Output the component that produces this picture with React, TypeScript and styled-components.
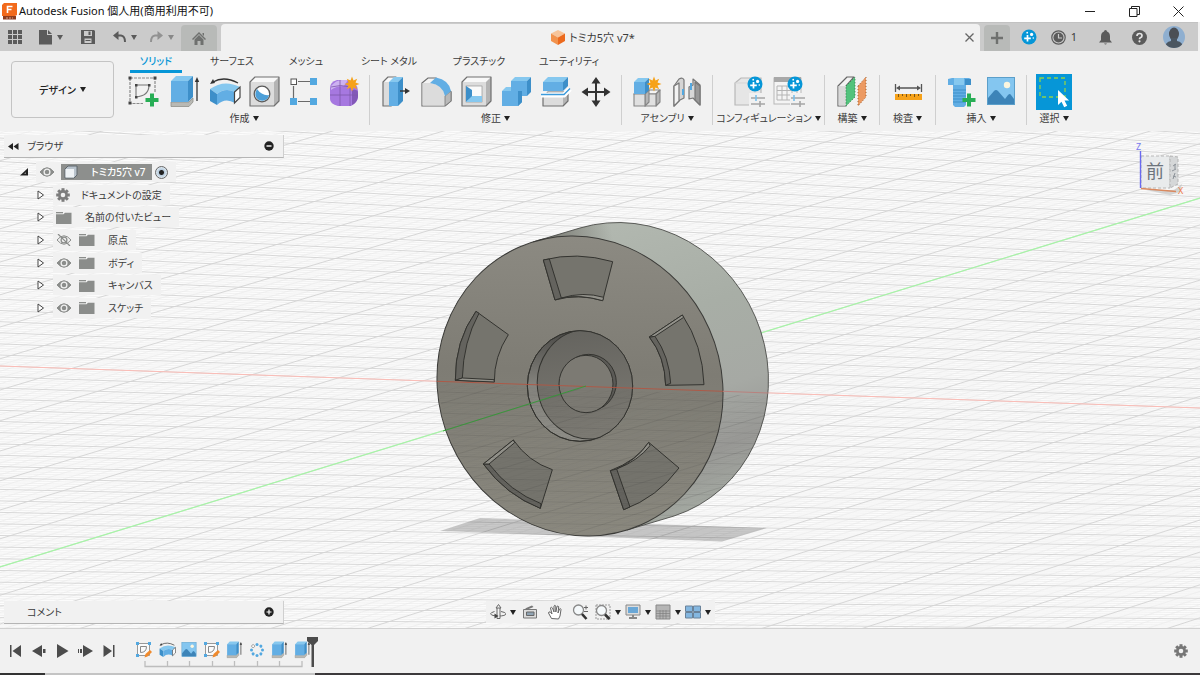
import React from "react";
import styled, { createGlobalStyle, css } from "styled-components";

const Global = createGlobalStyle`
  * { box-sizing: border-box; }
  html, body { margin: 0; padding: 0; }
  body {
    font-family: "Noto Sans", "Noto Sans CJK JP", sans-serif;
    font-feature-settings: "palt";
    font-size: 11px;
    line-height: 16px;
    color: #3c3c3c;
    background: #f1f1f1;
  }
  button { font: inherit; font-feature-settings: inherit; color: inherit; background: none; border: 0; padding: 0; margin: 0; }
  svg { display: block; flex: none; }
`;

const Page = styled.div`
  min-height: 100vh;
  display: flex;
  flex-direction: column;
`;

/* ---------- title bar ---------- */
const TitleBar = styled.header`
  height: 22px;
  background: #fff;
  display: flex;
  align-items: center;
  padding-left: 2px;
  color: #111;
`;
const Title = styled.h1`
  margin: 0;
  padding-left: 2px;
  font-size: 11px;
  font-weight: 400;
  flex: 1;
`;
const WindowButton = styled.button`
  width: 44px;
  height: 22px;
  display: grid;
  place-items: center;
`;

/* ---------- document tabs ---------- */
const TabStrip = styled.div`
  height: 29px;
  margin-right: 2px;
  background: #cbcbcb;
  display: flex;
  align-items: flex-end;
  border-top: 1px solid #c2c2c2;
`;
const QuickAccess = styled.div`
  width: 181px;
  height: 28px;
  display: flex;
  align-items: center;
`;
const QuickButton = styled.button<{ $w: number }>`
  width: ${(p) => p.$w}px;
  height: 28px;
  display: flex;
  align-items: center;
  justify-content: center;
  gap: 5px;
`;
const StubTab = styled.button<{ $w: number }>`
  width: ${(p) => p.$w}px;
  height: 26px;
  background: #b8bab8;
  border-radius: 4px 4px 0 0;
  display: grid;
  place-items: center;
`;
const DocumentTab = styled.div`
  flex: 1;
  height: 27px;
  margin: 0 4px;
  padding-right: 6px;
  background: #f1f1f1;
  border-radius: 4px 4px 0 0;
  display: flex;
  align-items: center;
`;
const DocumentName = styled.div`
  flex: 1;
  display: flex;
  align-items: center;
  justify-content: center;
  gap: 4px;
`;
const AccountTools = styled.div`
  display: flex;
  align-items: center;
  height: 28px;
`;

/* ---------- ribbon ---------- */
const Ribbon = styled.div`
  height: 80px;
  background: #f1f1f1;
  display: flex;
  padding-left: 11px;
`;
const WorkspaceButton = styled.button`
  width: 103px;
  height: 57px;
  margin: 10px 10px 0 0;
  border: 1px solid #c4c4c4;
  border-radius: 4px;
  font-size: 10px;
  font-weight: 500;
  color: #222;
  display: flex;
  align-items: center;
  justify-content: center;
  gap: 4px;
`;
const RibbonMain = styled.div`
  flex: 1;
`;
const RibbonTabs = styled.div`
  display: grid;
  grid-template-columns: 52px 100px 48px 118px 62px 118px;
  padding-left: 6px;
`;
const RibbonTab = styled.button<{ $active?: boolean }>`
  height: 22px;
  font-size: 10px;
  border-bottom: 3px solid transparent;
  white-space: nowrap;
  ${(p) =>
    p.$active &&
    css`
      color: #0696d7;
      font-weight: 500;
      border-color: #0696d7;
    `}
`;
const Groups = styled.div`
  display: flex;
`;
const Group = styled.section<{ $w: number }>`
  width: ${(p) => p.$w}px;
  height: 50px;
  margin-top: 2px;
  border-right: 1px solid #cfcfcf;
  display: flex;
  flex-direction: column;
  align-items: center;
  &:first-child { padding-right: 5px; }
  &:last-child { border: 0; }
`;
const IconRow = styled.div`
  display: flex;
  gap: 4px;
  height: 36px;
  margin-top: -1px;
`;
const ToolButton = styled.button<{ $selected?: boolean }>`
  width: 36px;
  height: 36px;
  background: ${(p) => (p.$selected ? "#0696d7" : "transparent")};
`;
const GroupLabel = styled.button`
  display: flex;
  align-items: center;
  gap: 3px;
  height: 18px;
  font-size: 10px;
  white-space: nowrap;
`;

/* ---------- canvas ---------- */
const Canvas = styled.main`
  position: relative;
  flex: 1;
  display: flex;
  flex-direction: column;
  justify-content: space-between;
  padding: 4px;
  background: #fcfcfc;
  overflow: hidden;
`;
const Scene = styled.svg`
  position: absolute;
  inset: 0;
  width: 100%;
  height: 100%;
`;
const CanvasRow = styled.div`
  position: relative;
  display: grid;
  grid-template-columns: 280px 1fr 280px;
  align-items: start;
`;
const PanelBar = styled.div`
  height: 23px;
  background: #f1f1f1;
  border-bottom: 1px solid #b5b5b5;
  border-right: 1px solid #cfcfcf;
  display: flex;
  align-items: center;
  padding: 0 8px 0 4px;
  font-size: 10px;
`;
const PanelTitle = styled.span`
  flex: 1;
  padding-left: 8px;
`;
const PanelToggle = styled.button`
  width: 11px;
  height: 11px;
`;
const Tree = styled.ul`
  list-style: none;
  margin: 3px 0 0;
  padding: 0;
  height: 158px;
  display: grid;
  grid-auto-rows: 1fr;
`;
const TreeItem = styled.li<{ $root?: boolean }>`
  display: flex;
  align-items: center;
  gap: ${(p) => (p.$root ? 7 : 8)}px;
  padding-left: ${(p) => (p.$root ? 16 : 32)}px;
`;
const TreeChip = styled.div<{ $root?: boolean }>`
  height: 20px;
  background: #f1f1f1;
  display: flex;
  align-items: center;
  gap: ${(p) => (p.$root ? 6 : 7)}px;
  padding: 0 8px 0 3px;
  font-size: 10px;
  white-space: nowrap;
`;
const TreeLabel = styled.span<{ $inset: number }>`
  padding-left: ${(p) => p.$inset}px;
`;
const RootLabel = styled.span`
  height: 16px;
  background: #8d8f8d;
  color: #fff;
  font-weight: 500;
  display: flex;
  align-items: center;
  gap: 13px;
  padding: 0 6px 0 3px;
`;
const ActiveRadio = styled.input`
  appearance: none;
  width: 13px;
  height: 13px;
  margin: 0 0 0 -3px;
  border: 1px solid #666;
  border-radius: 50%;
  background: radial-gradient(circle, #222 0 2px, #b7cbdc 3px, #e8f0f6 6px);
`;
const CubeSlot = styled.div`
  justify-self: end;
  padding: 5px 8px 0 0;
  grid-column: 3;
`;
const NavBar = styled.div`
  justify-self: center;
  height: 22px;
  background: #f1f1f1;
  display: flex;
  align-items: center;
  padding: 0 2px;
`;
const NavButton = styled.button<{ $menu?: boolean }>`
  width: ${(p) => (p.$menu ? 30 : 25)}px;
  height: 20px;
  display: flex;
  align-items: center;
  justify-content: center;
  gap: 4px;
`;

/* ---------- timeline ---------- */
const Timeline = styled.footer`
  height: 45px;
  background: #f1f1f1;
  border-top: 1px solid #d2d2d2;
  display: flex;
  align-items: flex-start;
  padding: 10px 8px 0 4px;
`;
const PlayButton = styled.button`
  width: 23px;
  height: 24px;
  display: grid;
  place-items: center;
`;
const Playback = styled.div`
  display: flex;
  width: 129px;
`;
const History = styled.div`
  position: relative;
  width: 180px;
`;
const Features = styled.div`
  display: grid;
  grid-template-columns: repeat(8, 1fr);
  height: 22px;
`;
const FeatureButton = styled.button`
  display: grid;
  place-items: center;
  height: 22px;
`;
const Marker = styled.svg`
  position: absolute;
  right: -6px;
  top: -2px;
`;
const Spacer = styled.div`
  flex: 1;
`;
const BottomEdge = styled.div`
  height: 2px;
  background: linear-gradient(90deg, #333 45px, #c4c4c4 45px 315px, #3d3a3c 315px);
`;

/* ---------- small glyphs ---------- */
const Caret = ({ c = "#222" }: { c?: string }) => (
  <svg width="6" height="5" viewBox="0 0 6 5"><path d="M0 0h6L3 5z" fill={c} /></svg>
);
const Gear = ({ size = 14, c = "#7d7d7d" }: { size?: number; c?: string }) => (
  <svg width={size} height={size} viewBox="-7 -7 14 14">
    {[0, 45, 90, 135].map((a) => (
      <rect key={a} x="-1.5" y="-6.8" width="3" height="13.6" fill={c} transform={`rotate(${a})`} />
    ))}
    <circle r="3.6" fill="none" stroke={c} strokeWidth="2.6" />
    <circle r="2.3" fill="#f1f1f1" />
  </svg>
);
const Eye = ({ off }: { off?: boolean }) => (
  <svg width="16" height="12" viewBox="0 0 16 12">
    <path d="M1 6Q8-2.5 15 6Q8 14.500 1 6z" fill={off ? "none" : "#8b8d8b"} stroke="#8b8d8b" />
    <circle cx="8" cy="6" r="2.900" fill={off ? "none" : "#8b8d8b"} stroke={off ? "#8b8d8b" : "#f1f1f1"} strokeWidth="1.300" />
    {off && <path d="M2 0l12 12" stroke="#8b8d8b" strokeWidth="1.200" />}
  </svg>
);
const Folder = () => (
  <svg width="16" height="13" viewBox="0 0 16 13">
    <path d="M0 1h7v1.300H0z" fill="#8b8d8b" /><path d="M0 3.300h7.500l1.500-1.600h6.500V13H0z" fill="#8b8d8b" />
  </svg>
);
const Badge = ({ x, y, r = 7.5 }: { x: number; y: number; r?: number }) => (
  <g transform={`translate(${x} ${y})`}>
    <circle r={r} fill="#0696d7" />
    <path d="M-1.500-2v6.500M-4.800 1.300h6.600" stroke="#fff" strokeWidth="1.700" />
    <circle cx="2.600" cy="-2.600" r="1.600" fill="#fff" />
    <circle cx="-1.800" cy="-4.300" r=".9" fill="#fff" />
    <circle cx="4.300" cy="1" r=".8" fill="#fff" />
  </g>
);
const Star = ({ x, y }: { x: number; y: number }) => (
  <path
    transform={`translate(${x} ${y})`}
    fill="#f6a21a"
    d="M0-7.500 1.500-3.400 5.200-5.200 3.500-1.500 7.500 0 3.500 1.500 5.200 5.200 1.500 3.500 0 7.500-1.500 3.500-5.200 5.200-3.500 1.500-7.500 0-3.500-1.500-5.200-5.200-1.500-3.400z"
  />
);
const Plus = ({ x, y }: { x: number; y: number }) => (
  <path transform={`translate(${x} ${y})`} d="M0-6.500v13M-6.500 0h13" stroke="#27ae55" strokeWidth="4" />
);

type BoxProps = { x: number; y: number; w: number; h: number; d: number; blue?: boolean };
/* Extruded block: front face at x,y with a depth offset d up and to the right. */
const Block = ({ x, y, w, h, d, blue }: BoxProps) => (
  <g strokeLinejoin="round" stroke={blue ? "none" : "#858585"} strokeWidth="1.100">
    <path d={`M${x} ${y}l${d}-${d}h${w}l-${d} ${d}z`} fill={blue ? "#86c8ef" : "#f5f5f5"} />
    <path d={`M${x + w} ${y}l${d}-${d}v${h}l-${d} ${d}z`} fill={blue ? "#3d8fc9" : "#b5b5b5"} />
    <rect x={x} y={y} width={w} height={h} fill={blue ? "#62aee4" : "#e0e0e0"} />
  </g>
);
/* Grey block drawn with its outline only round the silhouette. */
const SoftBlock = ({ x, y, w, h, d }: BoxProps) => (
  <g>
    <path d={`M${x} ${y}l${d}-${d}h${w}l-${d} ${d}z`} fill="#f8f8f8" />
    <path d={`M${x + w} ${y}l${d}-${d}v${h}l-${d} ${d}z`} fill="#b4b4b4" />
    <rect x={x} y={y} width={w} height={h} fill="#dcdcdc" />
    <path d={`M${x} ${y}l${d}-${d}h${w}v${h}l-${d} ${d}h-${w}z`} fill="none" stroke="#707070" strokeWidth="1.200" strokeLinejoin="round" />
  </g>
);

const toolArt: Record<string, React.ReactNode> = {
  sketch: (
    <>
      <path d="M4 4h25v14M4 4v25.500h13" fill="none" stroke="#8a8a8a" strokeWidth="1.200" strokeDasharray="3 1" />
      {[[4, 4], [29, 4], [4, 29]].map(([a, b]) => <rect key={`${a}-${b}`} x={a - 1.5} y={b - 1.5} width="3" height="3" fill="#444" />)}
      <path d="M10 11h13Q23 22 10 23z" fill="none" stroke="#777" strokeWidth="1.100" />
      {[[10, 11], [23, 11], [10, 23]].map(([a, b]) => <rect key={`${a}-${b}`} x={a - 1} y={b - 1} width="2.500" height="2.500" fill="#444" />)}
      <Plus x={26} y={26} />
    </>
  ),
  extrude: (
    <>
      <path d="M5 28h18l4-4v4l-4 4.500H5z" fill="#b9b9b4" stroke="#8f8f8a" strokeWidth=".8" />
      <Block x={5} y={7} w={17} h={21} d={5} blue />
      <path d="M31 27V6" stroke="#333" strokeWidth="1.300" /><path d="M28.800 8 31 3l2.200 5z" fill="#333" />
    </>
  ),
  revolve: (
    <>
      <path d="M4 15Q18 5 34 13l-5 5Q19 13 11 20z" fill="#86c8ef" />
      <path d="M4 15l7 5v11l-7-4z" fill="#3d8fc9" />
      <path d="M11 20Q19 13 29 18v11Q19 23 11 31z" fill="#62aee4" />
      <path d="M28.500 18l5.500-5v10.500l-5.500 5.500z" fill="#fff" stroke="#444" strokeWidth="1.200" />
      <path d="M7 8Q18 1.500 32 9" fill="none" stroke="#333" strokeWidth="1.300" /><path d="M4 10l3-5 2 4z" fill="#333" />
    </>
  ),
  hole: (
    <>
      <SoftBlock x={4} y={8} w={24} h={24} d={5} />
      <circle cx="16" cy="20" r="7.800" fill="#fff" stroke="#5a5a5a" strokeWidth="1.300" />
      <path d="M11 15q5 7 12 6a7 7 0 0 1-12.500 3Q8 20 11 15z" fill="#4c9fd8" />
    </>
  ),
  pattern: (
    <>
      <path d="M12 7.500h12M12 27.500h12M7.500 12v12" stroke="#6a6a6a" strokeWidth="1.200" />
      <rect x="5" y="5" width="5.500" height="5.500" fill="#fff" stroke="#555" />
      {[[24, 4], [4, 24], [24, 24]].map(([a, b]) => <rect key={`${a}-${b}`} x={a} y={b} width="7" height="7" fill="#53a8e0" />)}
    </>
  ),
  form: (
    <>
      <path d="M4 14q0-6 7-8h12q9 3 9 11v6q-1 6-7 9H12q-8-2-8-7z" fill="#a678e0" />
      <path d="M5 12q5-6 11-6h6l-4 6q-8 0-13 4z" fill="#cdb2f1" />
      <path d="M26 16q6-1 6 3v4q-1 6-6 8z" fill="#8258b8" />
      <path d="M14 6v26M24 12v20M4 21h28M5 13q9-3 20 0" fill="none" stroke="#7d58ab" strokeWidth=".8" />
      <Star x={26} y={10} />
    </>
  ),
  pressPull: (
    <>
      <SoftBlock x={5} y={8} w={8} h={24} d={5} /><Block x={11} y={8} w={9} h={24} d={5} blue />
      <path d="M22 17h6" stroke="#333" strokeWidth="1.400" /><path d="M27 14l5 3-5 3z" fill="#333" />
    </>
  ),
  fillet: (
    <>
      <path d="M4 9l6-5h8l15 14v9l-6 5H4z" fill="#f3f3f3" stroke="#6d6d6d" strokeWidth="1.200" />
      <path d="M4.500 9h8q14 2 15 15v7.500h-23z" fill="#dcdcdc" />
      <path d="M27 22l6-5v10l-6 5z" fill="#b9b9b9" stroke="#777" strokeWidth=".8" />
      <path d="M12 9l6-5.500Q31 6 33 17l-6 5Q25 11 12 9z" fill="#62aee4" />
    </>
  ),
  shell: (
    <>
      <SoftBlock x={4} y={8} w={24} h={24} d={5} />
      <rect x="8" y="12" width="16" height="16" fill="#fafafa" stroke="#888" strokeWidth=".6" />
      <path d="M8 12l6 4v7l-6 5z" fill="#3d8fc9" /><path d="M8 28l6-6h10v6z" fill="#86c8ef" />
    </>
  ),
  combine: (
    <>
      <Block x={13} y={7} w={16} h={15} d={4} blue /><Block x={4} y={17} w={16} h={15} d={4} blue />
      <path d="M13 10h11v12H13z" fill="#62aee4" /><path d="M20 17l4-4v15l-4 4z" fill="#3d8fc9" /><path d="M20 7h9v10h-9z" fill="#62aee4" />
    </>
  ),
  split: (
    <>
      <SoftBlock x={5} y={23} w={20} h={9} d={5} /><path d="M3 21h23l6-6" fill="none" stroke="#fff" strokeWidth="5" />
      <Block x={5} y={8} w={20} h={9} d={5} blue /><path d="M3 20.500h23l6-6" fill="none" stroke="#3c9bdc" strokeWidth="1.400" />
    </>
  ),
  move: (
    <>
      <path d="M18 7v22M7 18h22" stroke="#333" strokeWidth="2" />
      <path d="M18 3l4.500 6.500h-9zM18 33l4.500-6.500h-9zM3.500 18l6.500-4.500v9zM32.500 18 26 13.500v9z" fill="#333" />
    </>
  ),
  component: (
    <>
      <Block x={16} y={20} w={11} h={12} d={4} /><Block x={5} y={20} w={11} h={12} d={4} />
      <Block x={5} y={8} w={11} h={12} d={4} blue /><Star x={25} y={10} />
    </>
  ),
  joint: (
    <g stroke="#777" strokeWidth="1.200" strokeLinejoin="round">
      <path d="M5 12l5-7q4-2 5 1v18l-4 2-6 6z" fill="#d5d5d5" /><path d="M5 12l5-3v18l-5 5z" fill="#f3f3f3" />
      <path d="M20 13l4-2V5l7 6v20l-7-7-4 1z" fill="#d8d8d8" /><path d="M26 8l5 4v19l-5-5z" fill="#999" />
      <path d="M14 15v6M22 9v7" stroke="#53a8e0" strokeWidth="2" />
    </g>
  ),
  configure: (
    <>
      <path d="M4 9l6-5h20v22l-5 5H4z" fill="#e6e6e6" stroke="#b8b8b8" strokeWidth="1.200" /><path d="M4 9h20v22" fill="none" stroke="#d5d5d5" />
      <path d="M18 19h18v16H18z" fill="#f1f1f1" /><path d="M20 24h14M20 30h14" stroke="#a5a5a5" strokeWidth="1.300" />
      <path d="M25 21v6" stroke="#7cc0ea" strokeWidth="1.600" /><path d="M29 27v6" stroke="#a5a5a5" strokeWidth="1.600" />
      <Badge x={24} y={10} />
    </>
  ),
  configTable: (
    <>
      <rect x="3" y="4" width="27" height="26" fill="#f4f4f4" stroke="#b8b8b8" /><rect x="3" y="3" width="27" height="5" fill="#a8a8a8" />
      <path d="M6 12h20v14H6zM6 16.500h20M6 21h20M11 12v14M16 12v14M21 12v14" fill="none" stroke="#b4b4b4" />
      <path d="M19 19h16v16H19z" fill="#f1f1f1" /><path d="M20 24h14M20 30h14" stroke="#a5a5a5" strokeWidth="1.300" />
      <path d="M23 21v6" stroke="#7cc0ea" strokeWidth="1.600" /><path d="M29 27v6" stroke="#a5a5a5" strokeWidth="1.600" />
      <Badge x={24} y={10} />
    </>
  ),
  plane: (
    <>
      <path d="M4 12 13 3h7l-8 9v20H4z" fill="#f3f3f3" stroke="#666" strokeWidth="1.200" strokeLinejoin="round" />
      <path d="M4.500 12h7.500v19.500H4.500z" fill="#d9d9d9" />
      <path d="M12 12l9-9v20l-9 9z" fill="#52c27c" stroke="#2f7d4b" strokeDasharray="1 2" />
      <path d="M24 12l8-9v20l-8 9z" fill="#ec9a62" stroke="#a0602f" strokeDasharray="1 2" />
    </>
  ),
  measure: (
    <>
      <path d="M5.500 10v8M31.500 10v8M8 14h21" stroke="#555" strokeWidth="1.300" /><path d="M6 14l4-2.500v5zM31 14l-4-2.500v5z" fill="#555" />
      <rect x="5" y="20" width="27" height="6" fill="#f6a21a" />
      <path d="M8.500 20v3M12.500 20v2M16.500 20v3M20.500 20v2M24.500 20v3M28.500 20v2" stroke="#7b5415" />
    </>
  ),
  fastener: (
    <>
      <path d="M5 5l4-1h17l2 1v6H5z" fill="#62aee4" /><path d="M11 4h10v7H11z" fill="#86c8ef" /><path d="M22 5h6v6h-6z" fill="#3d8fc9" />
      <path d="M10 11h13v20l-2 2h-9l-2-2z" fill="#62aee4" /><path d="M10 16h13M10 19h13M10 22h13M10 25h13M10 28h13" stroke="#3d8fc9" />
      <Plus x={26} y={26} />
    </>
  ),
  image: (
    <>
      <rect x="4.500" y="3.500" width="27" height="27" fill="#84c6f0" stroke="#5b9fca" />
      <circle cx="24" cy="11" r="3.200" fill="#fbf6df" />
      <path d="M5 24l6-7q2-2 4 0l7 8 3-4q2-2 3 0l3 4v5H5z" fill="#3d84b8" />
    </>
  ),
  select: (
    <>
      <rect x="4" y="4" width="25" height="19" fill="none" stroke="#8fd14b" strokeWidth="1.300" strokeDasharray="4 3" />
      <path d="M22 16v15l3.500-3.200 2.700 5.400 3-1.500-2.700-5.200h4.600z" fill="#fff" />
    </>
  ),
};

const groups: { label: string; w: number; tools: [string, string][] }[] = [
  { label: "作成", w: 246, tools: [["sketch", "スケッチを作成"], ["extrude", "押し出し"], ["revolve", "回転"], ["hole", "穴"], ["pattern", "パターン"], ["form", "フォームを作成"]] },
  { label: "修正", w: 252, tools: [["pressPull", "プレス/プル"], ["fillet", "フィレット"], ["shell", "シェル"], ["combine", "結合"], ["split", "ボディを分割"], ["move", "移動"]] },
  { label: "アセンブリ", w: 91, tools: [["component", "新規コンポーネント"], ["joint", "ジョイント"]] },
  { label: "コンフィギュレーション", w: 112, tools: [["configure", "設定"], ["configTable", "設定テーブル"]] },
  { label: "構築", w: 55, tools: [["plane", "オフセット平面"]] },
  { label: "検査", w: 56, tools: [["measure", "計測"]] },
  { label: "挿入", w: 91, tools: [["fastener", "締結具"], ["image", "キャンバス"]] },
  { label: "選択", w: 54, tools: [["select", "選択"]] },
];

/* ---------- 3D scene ---------- */
type Line = { p: [number, number, number, number]; major: boolean };
const gridLines: Line[] = [];
/* Lines that run along the X axis. */
for (let i = -180; i <= 150; i++) {
  const t = i / 5;
  const y = 366 + t * 11 + t * Math.abs(t) * 0.02;
  const slope = 0.035 - (y - 366) * 0.0001;
  gridLines.push({ p: [0, y, 1200, y + slope * 1200], major: i % 5 === 0 });
}
/* Lines that run along the Y axis. */
for (let i = -110; i <= 85; i++) {
  const t = i / 5;
  const y = 567 + t * 28 + t * Math.abs(t) * 0.25;
  const slope = -0.3075 - (y - 567) * 0.00004;
  gridLines.push({ p: [0, y, 1200, y + slope * 1200], major: i % 5 === 0 });
}
const toPath = (major: boolean) =>
  gridLines.filter((l) => l.major === major).map(({ p }) => `M${p[0]} ${p[1].toFixed(1)}L${p[2]} ${p[3].toFixed(1)}`).join("");
const majorPath = toPath(true);
const minorPath = toPath(false);

const pockets: { outer: string; wall: string; lip: string }[] = [
  {
    outer: "M370 150Q470 124 578 155L548 272Q475 250 405 270Z",
    wall: "M370 150L388 147L424 264L405 270Z",
    lip: "M424 264Q490 244 551 262L548 272Q480 252 424 264Z",
  },
  {
    outer: "M688 381L787 315Q848 405 852 524L737 526Q735 440 688 381Z",
    wall: "M688 381L705 379Q748 440 752 520L737 526Q735 440 688 381Z",
    lip: "M688 381L787 315L791 322L705 379Z",
  },
  {
    outer: "M571 782Q650 752 686 697L777 774Q712 862 611 899Z",
    wall: "M571 782L590 777L630 891L611 899Z",
    lip: "M590 777Q655 752 690 707L686 697Q650 750 590 777Z",
  },
  {
    outer: "M190 762L280 690Q325 755 397 779L361 895Q258 855 190 762Z",
    wall: "M190 762L207 762Q270 845 363 881L361 895Q258 855 190 762Z",
    lip: "M190 762L280 690L284 698L207 762Z",
  },
  {
    outer: "M168 304L265 374Q222 440 223 516L106 511Q105 392 168 304Z",
    wall: "M168 304L177 310Q130 395 127 504L106 511Q105 392 168 304Z",
    lip: "M106 511L127 504L222 509L223 516Z",
  },
];

const FACE = { cx: 580, cy: 386, rx: 151.6, ry: 141.3, transform: "rotate(66.2 580 386)" };
const BODY = "M533 242L580 228A151.600 141.300 66.200 0 1 674 516L627 530";

const SceneView = () => (
  <Scene viewBox="0 131 1200 497" preserveAspectRatio="xMidYMid slice" role="img" aria-label="トミカ5穴 v7">
    <defs>
      <linearGradient id="side" gradientUnits="userSpaceOnUse" x1="600" y1="222" x2="700" y2="520">
        <stop offset="0" stopColor="#b2b8b0" />
        <stop offset=".35" stopColor="#a8aea6" />
        <stop offset=".62" stopColor="#a6a9a4" />
        <stop offset=".8" stopColor="#999996" />
        <stop offset="1" stopColor="#a7ada5" />
      </linearGradient>
      <linearGradient id="sideDark" gradientUnits="userSpaceOnUse" x1="550" y1="240" x2="612" y2="232">
        <stop offset="0" stopColor="#7c7d76" />
        <stop offset="1" stopColor="#7c7d76" stopOpacity="0" />
      </linearGradient>
      <linearGradient id="face" x1="0" y1="0" x2="0" y2="1" gradientTransform="rotate(-66 .5 .5)">
        <stop offset="0" stopColor="#8c8a82" />
        <stop offset=".45" stopColor="#7e7c74" />
        <stop offset="1" stopColor="#8b897f" />
      </linearGradient>
      <linearGradient id="bore" x1="0" y1="0" x2="0" y2="1">
        <stop offset="0" stopColor="#65645f" />
        <stop offset="1" stopColor="#7d7b74" />
      </linearGradient>
      <linearGradient id="boreWall" x1="0" y1="0" x2="0" y2="1">
        <stop offset="0" stopColor="#4b4a47" />
        <stop offset=".5" stopColor="#85847e" />
        <stop offset="1" stopColor="#8f8e88" />
      </linearGradient>
      <clipPath id="lowerBody">
        <path d="M430 383L770 396V545H430Z" />
      </clipPath>
      <clipPath id="wheel">
        <path d={`${BODY}A151.600 141.300 66.200 0 1 533 242Z`} />
      </clipPath>
      <clipPath id="boreClip"><ellipse cx="480" cy="528" rx="158" ry="166" /></clipPath>
    </defs>
    <path d={minorPath} stroke="#e9e9e9" fill="none" strokeWidth=".6" />
    <path d={majorPath} stroke="#d2d2d2" fill="none" strokeWidth=".9" />
    <path d="M0 366L1200 408" stroke="#fbbcb6" />
    <path d="M0 567L1200 198" stroke="#a6f5a6" strokeWidth="1.200" />
    <path d="M440 531L480 518L767 528L722 541.500Z" fill="#000" fillOpacity=".2" />

    <path d={`${BODY}Z`} fill="url(#side)" />
    <path d="M533 242L580 228Q600 222.500 620 223L640 280Z" fill="url(#sideDark)" />
    <path d={BODY} fill="none" stroke="#4c4d49" strokeWidth=".9" />
    <ellipse {...FACE} fill="url(#face)" stroke="#3b3b38" />

    <g transform="translate(420 210) scale(.33333)" stroke="#33332f" strokeWidth="3" strokeLinejoin="round">
      {pockets.map((p) => (
        <g key={p.outer}>
          <path d={p.outer} fill="#75746d" />
          <path d={p.wall} fill="#64635e" />
          <path d={p.lip} fill="#93928b" />
        </g>
      ))}
      <ellipse cx="480" cy="528" rx="158" ry="166" fill="url(#boreWall)" />
      <g clipPath="url(#boreClip)">
        <ellipse cx="508" cy="522" rx="156" ry="165" fill="url(#bore)" transform="rotate(-8 508 522)" />
      </g>
      <ellipse cx="480" cy="528" rx="158" ry="166" fill="none" />
      <ellipse cx="506" cy="518" rx="83" ry="85" fill="#5b5a56" />
      <ellipse cx="498" cy="522" rx="81" ry="86" fill="#7c7a73" />
    </g>

    <g clipPath="url(#lowerBody)">
      <g clipPath="url(#wheel)" fill="none">
        <path d={majorPath} stroke="#3c3c3c" strokeOpacity=".17" strokeWidth=".8" />
        <path d={minorPath} stroke="#3c3c3c" strokeOpacity=".04" strokeWidth=".6" />
      </g>
    </g>
    <path d="M437 381.300L723 391.300" stroke="#b5533f" strokeOpacity=".85" />
    <path d="M723 391.300L768 393" stroke="#b9827e" />
    <path d="M443 431L586 386" stroke="#2f9e33" strokeOpacity=".85" />
  </Scene>
);

const ViewCube = () => (
  <svg width="56" height="60" viewBox="1132 140 56 60" role="img" aria-label="ビューキューブ 前">
    <path d="M1146 190h28l8-6-2 8-10 3z" fill="#bbb" opacity=".6" />
    <path d="M1141 156h29v32h-29z" fill="#e9ebec" stroke="#b7b7b7" strokeDasharray="3 2" />
    <path d="M1170 156l8 1v27l-8 4z" fill="#d5d7d8" stroke="#b3b3b3" strokeDasharray="3 2" />
    <path d="M1140.500 151v37" stroke="#6a6af0" strokeWidth="1.400" />
    <path d="M1141 188.500l35 3" stroke="#d9895f" strokeWidth="1.400" />
    <text x="1136" y="150" fontSize="9" fill="#7777ee">Z</text>
    <text x="1178" y="194" fontSize="9" fill="#ee7b4a">X</text>
    <text x="1146" y="178" fontSize="18" fill="#6d747c">前</text>
    <path d="M1173 166l3-2M1172 171l4-2M1175 164v5M1173 176l3 1M1175 173l-2 6" stroke="#8c9298" />
  </svg>
);

/* ---------- navigation icons ---------- */
const navItems: { name: string; menu?: boolean; art: React.ReactNode }[] = [
  { name: "オービット", menu: true, art: <g fill="none" stroke="#666"><path d="M4.500 7.500q-4 1.200-4 2.300 1 2.200 8 2.200t7.500-2.200q0-1.400-5-2.300" /><path d="M7 3.500h3v11H7z" fill="#f4f4f4" /><path d="M6 4l2.500-3.500L11 4z" fill="#f4f4f4" /><path d="M4.500 9.500l4 2.500-4 2.500z" fill="#444" stroke="none" /></g> },
  { name: "ビュー正面", art: <g><path d="M3 4.500l7-3 1.500 1.500-6 2.500z" fill="#777" /><path d="M1.500 5.500h13v8.500h-13z" fill="#ddd" stroke="#777" /><path d="M4.500 8h7.500v3.500H4.500z" fill="#8fa3b3" stroke="#666" /></g> },
  { name: "画面移動", art: <path d="M4.500 14.500 1.500 9q0-1.800 2-.8L5 10 3.500 4q.8-1.800 2 0L7 8V2q.8-1.500 1.800 0V8l1.200-5.500q1-1.300 1.700.3L11 9l1.500-4q1.300-1 1.500.5L13 12l-1.500 3z" fill="#fff" stroke="#666" /> },
  { name: "ズーム", art: <g><circle cx="6.500" cy="6" r="5" fill="#f5f9fb" stroke="#888" strokeWidth="1.300" /><path d="M10 10l4.500 5" stroke="#333" strokeWidth="2.600" /><path d="M12 3.500h4M14 1.500v4M12 7.500h4" stroke="#666" /></g> },
  { name: "フィット", menu: true, art: <g><path d="M1 1h14v14H1z" fill="none" stroke="#999" strokeDasharray="2 1" /><circle cx="6.500" cy="6.500" r="5" fill="#f5f9fb" stroke="#888" strokeWidth="1.300" /><path d="M10 10.500l4.500 4.500" stroke="#333" strokeWidth="2.600" /></g> },
  { name: "表示設定", menu: true, art: <g><path d="M1 1h14v10H1z" fill="#ddd" stroke="#888" /><path d="M3 3h10v6H3z" fill="#6aa7d6" /><path d="M7 11h2v2h3v2H4v-2h3z" fill="#888" /></g> },
  { name: "グリッドとスナップ", menu: true, art: <g><path d="M1 1h14v14H1z" fill="#b5b5b5" stroke="#888" /><path d="M1 7h14M1 9.500h14M1 12h14M5 6v9M8 6v9M11 6v9" stroke="#7f7f7f" strokeWidth=".7" /></g> },
  { name: "ビューポート", menu: true, art: <g fill="#84b7e0" stroke="#6a8299"><path d="M.5 2h7v5.500h-7zM8.500 2h7v5.500h-7zM.5 8.500h7V14h-7zM8.500 8.500h7V14h-7z" /></g> },
];

const timelineArt: [string, string][] = [
  ["スケッチ1", "sketch"], ["回転1", "revolve"], ["キャンバス1", "image"], ["スケッチ2", "sketch"],
  ["押し出し1", "extrude"], ["円形状パターン1", "circular"], ["押し出し2", "extrude"], ["押し出し3", "extrude"],
];
const FeatureIcon = ({ kind }: { kind: string }) => {
  if (kind === "circular")
    return (
      <svg width="16" height="16" viewBox="-8 -8 16 16">
        {[0, 45, 90, 135, 180, 225, 270, 315].map((a) => (
          <circle key={a} cx="0" cy="-5.500" r="1.500" transform={`rotate(${a})`} fill={a === 315 ? "#fff" : "#53a8e0"} stroke={a === 315 ? "#777" : "none"} strokeWidth=".6" />
        ))}
      </svg>
    );
  if (kind === "sketch")
    return (
      <svg width="16" height="16" viewBox="0 0 16 16">
        <path d="M1.500 1.500h12v12h-12z" fill="#fafafa" stroke="#999" />
        <path d="M4.500 4.500h6q0 6-6 6z" fill="none" stroke="#888" />
        <path d="M0 0h3v3H0zM12 0h3v3h-3zM0 12h3v3H0z" fill="#53a8e0" />
        <path d="M8.500 15.500l1-3.500 4.500-4 2 2-4.500 4.500z" fill="#f08a2c" />
      </svg>
    );
  return <svg width="18" height="18" viewBox="1 1 34 34">{toolArt[kind]}</svg>;
};

const playIcons: [string, React.ReactNode][] = [
  ["最初へ", <path key="a" d="M2 2h1.500v12H2zM13 2v12L4.500 8z" />],
  ["1 つ戻る", <path key="b" d="M11 2v12L1 8zM12 6h2.500v4H12z" />],
  ["再生", <path key="c" d="M3 1l11.500 7L3 15z" />],
  ["1 つ進む", <path key="d" d="M6 2v12l10-6zM1 6h1v4H1zM3 6h2v4H3z" />],
  ["最後へ", <path key="e" d="M3.500 2v12l8.500-6zM13 2h1.500v12H13z" />],
];

const treeRows: { label: string; eye?: "on" | "off"; gear?: boolean; inset: number }[] = [
  { label: "ドキュメントの設定", gear: true, inset: 4 },
  { label: "名前の付いたビュー", inset: 6 },
  { label: "原点", eye: "off", inset: 6 },
  { label: "ボディ", eye: "on", inset: 6 },
  { label: "キャンバス", eye: "on", inset: 6 },
  { label: "スケッチ", eye: "on", inset: 6 },
];

export default function App() {
  return (
    <Page>
      <Global />
      <TitleBar>
        <svg width="15" height="17" viewBox="0 0 15 17">
          <path d="M0 2l2-2h13v12l-2 1H0z" fill="#f26a1b" /><path d="M1 13h13v3.500H1z" fill="#8c3b1c" />
          <path d="M5.500 10V3.500h5M5.500 6.500h4" fill="none" stroke="#fff" strokeWidth="1.600" />
          <path d="M4 15h7" stroke="#d9a48d" strokeDasharray="2 1" />
        </svg>
        <Title>Autodesk Fusion 個人用(商用利用不可)</Title>
        <WindowButton aria-label="最小化"><svg width="10" height="10"><path d="M0 5.500h10" stroke="#222" /></svg></WindowButton>
        <WindowButton aria-label="元に戻す"><svg width="11" height="11"><path d="M.5 2.500h7.500v8H.5zM2.500 2.500v-2h8v8H8" fill="none" stroke="#222" /></svg></WindowButton>
        <WindowButton aria-label="閉じる"><svg width="11" height="11"><path d="M.5.500l10 10M10.500.500l-10 10" stroke="#222" /></svg></WindowButton>
      </TitleBar>

      <TabStrip>
        <QuickAccess>
          <QuickButton $w={30} aria-label="データ パネル">
            <svg width="14" height="14" fill="#5b5b5b">
              {[0, 5, 10].map((x) => [0, 5, 10].map((y) => <rect key={`${x}${y}`} x={x} y={y} width="4" height="4" />))}
            </svg>
          </QuickButton>
          <QuickButton $w={42} aria-label="ファイル">
            <svg width="13" height="16"><path d="M0 1h8v5h5v9.500H0z" fill="#5b5b5b" /><path d="M9 1l4 4H9z" fill="#5b5b5b" /></svg>
            <Caret c="#5b5b5b" />
          </QuickButton>
          <QuickButton $w={32} aria-label="保存">
            <svg width="14" height="14"><path d="M0 0h13l1 1v13H0z" fill="#5b5b5b" /><path d="M3 1h8v5H3zM3.500 8.500h7V13h-7z" fill="#cbcbcb" /><path d="M7.500 1.500h2V5h-2zM4.500 10h5v1h-5z" fill="#5b5b5b" /></svg>
          </QuickButton>
          <QuickButton $w={42} aria-label="元に戻す">
            <svg width="13" height="12"><path d="M3 4.500h5q4 .5 4 6.500" fill="none" stroke="#5b5b5b" strokeWidth="2" /><path d="M0 4.500 5.500 0v9z" fill="#5b5b5b" /></svg>
            <Caret c="#5b5b5b" />
          </QuickButton>
          <QuickButton $w={31} aria-label="やり直し">
            <svg width="13" height="12"><path d="M10 4.500H5q-4 .5-4 6.500" fill="none" stroke="#929292" strokeWidth="2" /><path d="M13 4.500 7.500 0v9z" fill="#929292" /></svg>
            <Caret c="#888" />
          </QuickButton>
        </QuickAccess>
        <StubTab $w={36} aria-label="ホーム">
          <svg width="14" height="13"><path d="M7 0l7 7-1 1-6-6-6 6-1-1zM10.500 1H12v3l-1.500-1.500z" fill="#6f716f" /><path d="M2.500 7.500 7 3l4.500 4.500V13H8.500V9h-3v4h-3z" fill="#6f716f" /></svg>
        </StubTab>
        <DocumentTab>
          <DocumentName>
            <svg width="14" height="15"><path d="M7 0l7 3.500L7 7.500 0 3.500z" fill="#f7c49a" /><path d="M0 3.500l7 4V15l-7-4z" fill="#f2924c" /><path d="M14 3.500l-7 4V15l7-4z" fill="#ec6a1e" /></svg>
            トミカ5穴 v7*
          </DocumentName>
          <button aria-label="タブを閉じる"><svg width="9" height="9"><path d="M.5.500l8 8M8.500.500l-8 8" stroke="#666" strokeWidth="1.300" /></svg></button>
        </DocumentTab>
        <StubTab $w={26} aria-label="新しいデザイン"><svg width="12" height="12"><path d="M6 0v12M0 6h12" stroke="#6f716f" strokeWidth="2.400" /></svg></StubTab>
        <AccountTools>
          <QuickButton $w={37} aria-label="拡張機能"><svg width="16" height="16" viewBox="-8 -8 16 16"><Badge x={0} y={0} /></svg></QuickButton>
          <QuickButton $w={34} aria-label="ジョブ ステータス">
            <svg width="15" height="15" viewBox="-7.500 -7.500 15 15"><circle r="6.700" fill="none" stroke="#5b5b5b" strokeWidth="1.200" /><circle r="5" fill="#5b5b5b" /><path d="M0-3.500V.5h3.500" fill="none" stroke="#cbcbcb" strokeWidth="1.200" /></svg>
            1
          </QuickButton>
          <QuickButton $w={48} aria-label="通知">
            <svg width="13" height="15"><path d="M6.500 0q1.500 0 1.500 1.500 3 1 3 5V10l2 2.500H0L2 10V6.500q0-4 3-5Q5 0 6.500 0zM5 13.500h3q-1.500 2-3 0z" fill="#5b5b5b" /></svg>
          </QuickButton>
          <QuickButton $w={20} aria-label="ヘルプ">
            <svg width="15" height="15"><circle cx="7.500" cy="7.500" r="7.500" fill="#5b5b5b" /><path d="M5 6q0-2.500 2.500-2.500T10 5.700Q10 7 8.300 7.700q-.8.500-.8 1.500" fill="none" stroke="#e5e5e5" strokeWidth="1.700" /><circle cx="7.500" cy="11.300" r="1.100" fill="#e5e5e5" /></svg>
          </QuickButton>
          <QuickButton $w={49} aria-label="アカウント">
            <svg width="22" height="22" viewBox="0 0 22 22"><clipPath id="avatar"><circle cx="11" cy="11" r="11" /></clipPath><g clipPath="url(#avatar)"><path d="M0 0h22v22H0z" fill="#8fafd0" /><ellipse cx="11" cy="8" rx="5" ry="6.500" fill="#4b4f55" /><path d="M2 22q0-6 6-7v-3h6v3q6 1 6 7z" fill="#4b5661" /></g></svg>
          </QuickButton>
        </AccountTools>
      </TabStrip>

      <Ribbon>
        <WorkspaceButton>デザイン <Caret /></WorkspaceButton>
        <RibbonMain>
          <RibbonTabs>
            {["ソリッド", "サーフェス", "メッシュ", "シート メタル", "プラスチック", "ユーティリティ"].map((t, i) => (
              <RibbonTab key={t} $active={i === 0}>{t}</RibbonTab>
            ))}
          </RibbonTabs>
          <Groups>
            {groups.map((g) => (
              <Group key={g.label} $w={g.w}>
                <IconRow>
                  {g.tools.map(([id, name]) => (
                    <ToolButton key={id} aria-label={name} $selected={id === "select"}>
                      <svg width="36" height="36" viewBox="0 0 36 36">{toolArt[id]}</svg>
                    </ToolButton>
                  ))}
                </IconRow>
                <GroupLabel>{g.label}<Caret /></GroupLabel>
              </Group>
            ))}
          </Groups>
        </RibbonMain>
      </Ribbon>

      <Canvas>
        <SceneView />
        <CanvasRow>
          <aside>
            <PanelBar>
              <svg width="11" height="7"><path d="M5 0v7L0 3.500zM10.500 0v7l-5-3.500z" fill="#222" /></svg>
              <PanelTitle>ブラウザ</PanelTitle>
              <PanelToggle aria-label="閉じる"><svg width="10" height="10"><circle cx="5" cy="5" r="4.700" fill="#222" /><path d="M2.500 5h5" stroke="#fff" strokeWidth="1.400" /></svg></PanelToggle>
            </PanelBar>
            <Tree>
              <TreeItem $root>
                <button aria-label="折りたたむ"><svg width="9" height="8"><path d="M8 0v7.500H0z" fill="#222" /><path d="M6 4v2H4z" fill="#888" /></svg></button>
                <TreeChip $root>
                  <Eye />
                  <RootLabel>
                    <svg width="14" height="14" viewBox="0 0 14 14"><path d="M1 4l3-3h9v9l-3 3H1z" fill="#b9c3cc" stroke="#5f666c" /><path d="M1.500 4H10v8.500H1.500z" fill="#eef2f5" /></svg>
                    トミカ5穴 v7
                  </RootLabel>
                  <ActiveRadio type="radio" name="active" defaultChecked aria-label="トミカ5穴 v7 をアクティブ化" />
                </TreeChip>
              </TreeItem>
              {treeRows.map((r) => (
                <TreeItem key={r.label}>
                  <button aria-label={`${r.label} を展開`}><svg width="9" height="10"><path d="M2 1v8l5.500-4z" fill="#fff" stroke="#444" /></svg></button>
                  <TreeChip>
                    {r.eye && <Eye off={r.eye === "off"} />}
                    {r.gear ? <Gear /> : <Folder />}
                    <TreeLabel $inset={r.inset}>{r.label}</TreeLabel>
                  </TreeChip>
                </TreeItem>
              ))}
            </Tree>
          </aside>
          <CubeSlot><ViewCube /></CubeSlot>
        </CanvasRow>
        <CanvasRow>
          <PanelBar>
            <svg width="11" height="7" />
            <PanelTitle>コメント</PanelTitle>
            <PanelToggle aria-label="コメントを開く"><svg width="10" height="10"><circle cx="5" cy="5" r="4.700" fill="#222" /><path d="M2.500 5h5M5 2.500v5" stroke="#fff" strokeWidth="1.200" /></svg></PanelToggle>
          </PanelBar>
          <NavBar>
            {navItems.map((n) => (
              <NavButton key={n.name} $menu={n.menu} aria-label={n.name}>
                <svg width="16" height="16" viewBox="0 0 16 16">{n.art}</svg>
                {n.menu && <Caret />}
              </NavButton>
            ))}
          </NavBar>
        </CanvasRow>
      </Canvas>

      <Timeline>
        <Playback>
          {playIcons.map(([name, art]) => (
            <PlayButton key={name} aria-label={name}><svg width="16" height="16" fill="#4c4c4c">{art}</svg></PlayButton>
          ))}
        </Playback>
        <History>
          <Features>
            {timelineArt.map(([name, kind]) => (
              <FeatureButton key={name} aria-label={name}><FeatureIcon kind={kind} /></FeatureButton>
            ))}
          </Features>
          <svg width="180" height="7" fill="none" stroke="#bdbdbd">
            <path d="M12 0v5.500h157V0M34.500 0v5M56.500 0v5M79.500 0v5M101.500 0v5M124.500 0v5M146.500 0v5" strokeWidth="1.300" />
          </svg>
          <Marker width="13" height="31"><path d="M1 0h11v4l-4 4v22H5.500V8L1 4z" fill="#4c4c4c" /></Marker>
        </History>
        <Spacer />
        <PlayButton aria-label="設定"><Gear c="#777" /></PlayButton>
      </Timeline>
      <BottomEdge />
    </Page>
  );
}
